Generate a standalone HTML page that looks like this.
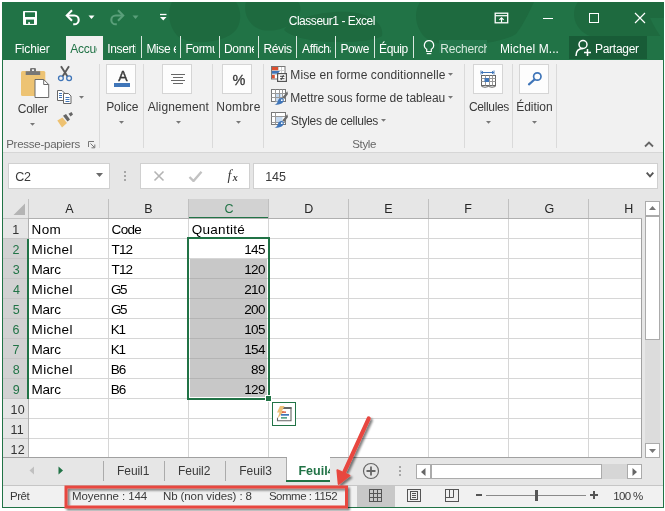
<!DOCTYPE html>
<html><head><meta charset="utf-8"><title>Classeur1 - Excel</title>
<style>
*{box-sizing:border-box;margin:0;padding:0}
html,body{width:665px;height:511px;background:#fff;overflow:hidden}
body{font-family:"Liberation Sans",sans-serif;font-size:12px;color:#444;position:relative}
.a{position:absolute}
.t{position:absolute;white-space:nowrap;line-height:1;height:1.2em;overflow:visible}
</style></head><body>
<div class="a" style="left:2px;top:2px;width:662px;height:506px;background:#e6e6e6;"></div>
<div class="a" style="left:2px;top:2px;width:662px;height:58px;background:#217346;"></div>
<svg class="a" style="left:2px;top:2px" width="662" height="58" viewBox="2 2 662 58"><g fill="#1e6a3f"><path d="M172 2C166 14 170 30 180 38C196 46 226 42 236 30C243 20 240 8 236 2z"/><path d="M246 2C243 12 248 26 262 30C280 33 296 24 300 12C301 8 300 4 298 2z"/><path d="M284 30C290 20 320 10 350 12C372 14 384 24 382 36C370 44 300 46 284 30z"/><path d="M420 2C412 14 416 34 432 42C456 48 500 44 516 34C524 24 530 10 534 2z"/><path d="M578 2C570 12 574 30 590 36L664 36L664 2z"/></g><path d="M650 18C654 26 658 34 664 40L664 18z" fill="#217346"/></svg>
<svg class="a" style="left:23px;top:11px" width="14" height="14" viewBox="0 0 14 14"><rect x="0" y="0" width="14" height="14" rx="0.800" fill="#fff"/><rect x="2" y="1.300" width="10" height="4.700" fill="#217346"/><rect x="3" y="8.600" width="8" height="4.300" fill="#217346"/><rect x="5.200" y="11.200" width="1.800" height="1.700" fill="#fff"/></svg>
<svg class="a" style="left:64px;top:9px" width="18" height="18" viewBox="0 0 18 18"><path d="M3.200 6.500H10.300A4.400 4.400 0 0 1 10.300 15.300H9.200" fill="none" stroke="#fff" stroke-width="2.100"/><path d="M8 1.300L2.800 6.500L8 11.700" fill="none" stroke="#fff" stroke-width="2.100"/></svg>
<svg class="a" style="left:88px;top:15px" width="8" height="5" viewBox="0 0 8 5"><path d="M0.500 0.500h6l-3 3.500z" fill="#fff"/></svg>
<svg class="a" style="left:108px;top:9px" width="18" height="18" viewBox="0 0 18 18"><g transform="translate(18,0) scale(-1,1)"><path d="M3.200 6.500H10.300A4.400 4.400 0 0 1 10.300 15.300H9.200" fill="none" stroke="#5a9f7a" stroke-width="2.100"/><path d="M8 1.300L2.800 6.500L8 11.700" fill="none" stroke="#5a9f7a" stroke-width="2.100"/></g></svg>
<svg class="a" style="left:132px;top:15px" width="8" height="5" viewBox="0 0 8 5"><path d="M0.500 0.500h6l-3 3.500z" fill="#5a9f7a"/></svg>
<svg class="a" style="left:159px;top:13px" width="9" height="9" viewBox="0 0 9 9"><path d="M1 1.5h6.5" stroke="#fff" stroke-width="1.3"/><path d="M1 4h6.5l-3.25 3.5z" fill="#fff"/></svg>
<svg class="a" style="left:494px;top:12px" width="15" height="12" viewBox="0 0 15 12"><rect x="1.200" y="1.200" width="12.500" height="9.600" fill="none" stroke="#fff" stroke-width="1.300"/><path d="M1.200 3.700h12.500" stroke="#fff" stroke-width="1.200"/><path d="M7.500 10.500V6 M5.400 7.900l2.100-2.100 2.100 2.100" fill="none" stroke="#fff" stroke-width="1.200"/></svg>
<div class="a" style="left:543px;top:18px;width:10px;height:1px;background:#fff;"></div>
<div class="a" style="left:589px;top:13px;width:10px;height:10px;border:1px solid #fff;"></div>
<svg class="a" style="left:634px;top:12px" width="12" height="12" viewBox="0 0 12 12"><path d="M1 1l10 10M11 1L1 11" stroke="#fff" stroke-width="1.2"/></svg>
<div class="a" style="left:66px;top:36px;width:37px;height:25px;background:#f1f1f1;"></div>
<div class="a" style="left:141px;top:36px;width:1px;height:22px;background:#d9e8df;"></div>
<div class="a" style="left:180px;top:36px;width:1px;height:22px;background:#d9e8df;"></div>
<div class="a" style="left:219px;top:36px;width:1px;height:22px;background:#d9e8df;"></div>
<div class="a" style="left:258px;top:36px;width:1px;height:22px;background:#d9e8df;"></div>
<div class="a" style="left:296px;top:36px;width:1px;height:22px;background:#d9e8df;"></div>
<div class="a" style="left:335px;top:36px;width:1px;height:22px;background:#d9e8df;"></div>
<div class="a" style="left:374px;top:36px;width:1px;height:22px;background:#d9e8df;"></div>
<div class="a" style="left:413px;top:36px;width:1px;height:22px;background:#d9e8df;"></div>
<svg class="a" style="left:422px;top:39px" width="14" height="16" viewBox="0 0 14 16"><path d="M7 1.600a4.600 4.600 0 0 1 2.300 8.600v2.300h-4.600v-2.300A4.600 4.600 0 0 1 7 1.600z" fill="none" stroke="#fff" stroke-width="1.200"/><path d="M4.700 14.600h4.600" stroke="#fff" stroke-width="1.200"/></svg>
<div class="a" style="left:439px;top:40px;width:48px;height:13px;background:#24774c;"></div>
<div class="a" style="left:569px;top:36px;width:78px;height:23px;background:#185c37;"></div>
<svg class="a" style="left:575px;top:39px" width="18" height="18" viewBox="0 0 18 18"><circle cx="8" cy="5.500" r="4" fill="none" stroke="#fff" stroke-width="1.500"/><path d="M1 17c0-5 3-7.500 7-7.500" fill="none" stroke="#fff" stroke-width="1.500"/><path d="M12.500 10v7M9 13.500h7" stroke="#fff" stroke-width="1.500"/></svg>
<div class="a" style="left:3px;top:60px;width:660px;height:92px;background:#f1f1f1;"></div>
<div class="a" style="left:3px;top:152px;width:660px;height:1px;background:#d6d6d6;"></div>
<div class="a" style="left:99px;top:64px;width:1px;height:84px;background:#dadada;"></div>
<div class="a" style="left:143px;top:64px;width:1px;height:84px;background:#dadada;"></div>
<div class="a" style="left:212px;top:64px;width:1px;height:84px;background:#dadada;"></div>
<div class="a" style="left:263px;top:64px;width:1px;height:84px;background:#dadada;"></div>
<div class="a" style="left:464px;top:64px;width:1px;height:84px;background:#dadada;"></div>
<div class="a" style="left:512px;top:64px;width:1px;height:84px;background:#dadada;"></div>
<div class="a" style="left:556px;top:64px;width:1px;height:84px;background:#dadada;"></div>
<svg class="a" style="left:20px;top:67px" width="31" height="32" viewBox="0 0 31 32"><rect x="1" y="4" width="24.300" height="25" rx="1.500" fill="#edc373"/><path d="M5.700 8V4.300h4.300V2.200a1.200 1.200 0 0 1 1.200-1.200h3.600a1.200 1.200 0 0 1 1.200 1.200v2.100h4.200V8z" fill="#777"/><rect x="12" y="2.300" width="2" height="1.700" fill="#f1f1f1"/><path d="M15 12.500h8.700l5 5v13h-13.700z" fill="#fff" stroke="#6a6a6a" stroke-width="1"/><path d="M23.700 12.500v5h5" fill="none" stroke="#6a6a6a" stroke-width="1"/></svg>
<svg class="a" style="left:30.0px;top:123.0px" width="5" height="3" viewBox="0 0 5 3"><path d="M0 0h5l-2.500 2.800z" fill="#777"/></svg>
<svg class="a" style="left:57px;top:65px" width="16" height="17" viewBox="0 0 16 17"><path d="M4 1.200L10.500 11.500M12 1.200L5.500 11.500" stroke="#5a5a5a" stroke-width="1.900" fill="none"/><circle cx="3.900" cy="13.200" r="2.400" fill="#f1f1f1" stroke="#3f75b8" stroke-width="1.300"/><circle cx="12.100" cy="13.200" r="2.400" fill="#f1f1f1" stroke="#3f75b8" stroke-width="1.300"/></svg>
<svg class="a" style="left:56px;top:89px" width="18" height="16" viewBox="0 0 18 16"><path d="M1.500 1.500h4.500l2.500 2.500v7.500h-7z" fill="#fff" stroke="#666"/><path d="M7.500 4.500h5l2.500 2.500v7.500h-7.500z" fill="#fff" stroke="#666"/><path d="M3 4.500h3M3 6.500h3M3 8.500h3M9.500 8.500h4M9.500 10.500h4M9.500 12.500h4" stroke="#3f75b8" stroke-width="1"/></svg>
<svg class="a" style="left:79.0px;top:95.5px" width="5" height="3" viewBox="0 0 5 3"><path d="M0 0h5l-2.500 2.800z" fill="#777"/></svg>
<svg class="a" style="left:57px;top:111px" width="17" height="17" viewBox="0 0 17 17"><path d="M0.300 9.500l5.200-3 4.500 5.500-5 4.500z" fill="#eec272"/><path d="M6 4.800l3-1.800 4 5.500-2.500 2z" fill="#666"/><path d="M11.500 2.800l3-1.800 1.500 2.500-2.500 2z" fill="#666"/></svg>
<svg class="a" style="left:88px;top:141px" width="8" height="8" viewBox="0 0 8 8"><path d="M0.5 6V0.5H6" fill="none" stroke="#777"/><path d="M2.5 2.5l4 4M6.8 3.5v3.3H3.5" fill="none" stroke="#777"/></svg>
<div class="a" style="left:106px;top:64px;width:30px;height:30px;background:#fdfdfd;border:1px solid #d5d5d5;"></div>
<div class="a" style="left:162px;top:64px;width:30px;height:30px;background:#fdfdfd;border:1px solid #d5d5d5;"></div>
<div class="a" style="left:222px;top:64px;width:30px;height:30px;background:#fdfdfd;border:1px solid #d5d5d5;"></div>
<div class="a" style="left:473px;top:64px;width:30px;height:30px;background:#fdfdfd;border:1px solid #d5d5d5;"></div>
<div class="a" style="left:519px;top:64px;width:30px;height:30px;background:#fdfdfd;border:1px solid #d5d5d5;"></div>
<div class="a" style="left:114px;top:83px;width:16px;height:4px;background:#3f75b8;"></div>
<svg class="a" style="left:119.0px;top:120.5px" width="5" height="3" viewBox="0 0 5 3"><path d="M0 0h5l-2.500 2.800z" fill="#777"/></svg>
<div class="a" style="left:171px;top:74px;width:14px;height:1px;background:#666;"></div>
<div class="a" style="left:173px;top:77px;width:10px;height:1px;background:#666;"></div>
<div class="a" style="left:171px;top:80px;width:14px;height:1px;background:#666;"></div>
<div class="a" style="left:173px;top:83px;width:10px;height:1px;background:#666;"></div>
<svg class="a" style="left:175.5px;top:120.5px" width="5" height="3" viewBox="0 0 5 3"><path d="M0 0h5l-2.500 2.800z" fill="#777"/></svg>
<svg class="a" style="left:236.0px;top:120.5px" width="5" height="3" viewBox="0 0 5 3"><path d="M0 0h5l-2.500 2.800z" fill="#777"/></svg>
<svg class="a" style="left:271px;top:66px" width="17" height="16" viewBox="0 0 17 16"><rect x="0.500" y="0.500" width="13.500" height="12.500" fill="#fff" stroke="#777"/><path d="M1 4.500h12.500M1 8.500h12.500M7.500 1v12M10.500 1v12" stroke="#cfcfcf" fill="none"/><rect x="1" y="1" width="6" height="3.200" fill="#dc4f2f"/><path d="M1 5h8l-2.500 2.800h-5.500z" fill="#3f75b8"/><rect x="1" y="9" width="2.800" height="3.400" fill="#dc4f2f"/><rect x="6.600" y="7.600" width="8.800" height="7.800" fill="#fff" stroke="#555" stroke-width="1.200"/><path d="M9 10.300h4.500M9 12.700h4.500M12.500 9l-2.500 5" stroke="#333" stroke-width="0.900"/></svg>
<svg class="a" style="left:448.0px;top:73.0px" width="5" height="3" viewBox="0 0 5 3"><path d="M0 0h5l-2.500 2.800z" fill="#777"/></svg>
<svg class="a" style="left:271px;top:89px" width="18" height="17" viewBox="0 0 18 17"><rect x="0.5" y="0.5" width="14" height="12" fill="#fff" stroke="#777"/><rect x="4.5" y="4.5" width="6" height="8" fill="#c5d9ef"/><path d="M0.5 4.5h14M0.5 8.5h14M4.5 0.5v12M8.5 0.5v12M11.5 0.5v12" stroke="#999" fill="none"/><path d="M16.300 2.300l-5 6.200 2 1.600 3.700-5z" fill="#6a6a6a"/><path d="M12.800 10.800c0 2.800-2.800 5.200-9.300 5.200c2-1 3-2.300 3.500-4.200c0.500-2 2.300-2.900 3.800-2.700c1.200 0.200 2 0.800 2 1.700z" fill="#3f75b8"/><circle cx="10.800" cy="11.200" r="0.900" fill="#fff"/></svg>
<svg class="a" style="left:448.0px;top:95.5px" width="5" height="3" viewBox="0 0 5 3"><path d="M0 0h5l-2.500 2.800z" fill="#777"/></svg>
<svg class="a" style="left:271px;top:112px" width="18" height="17" viewBox="0 0 18 17"><rect x="0.5" y="0.5" width="14" height="12" fill="#fff" stroke="#777"/><rect x="4.5" y="4.5" width="7" height="6" fill="#c5d9ef"/><path d="M0.5 4.5h14M0.5 10.5h14M4.5 0.5v12" stroke="#999" fill="none"/><path d="M16.300 2.300l-5 6.200 2 1.600 3.700-5z" fill="#6a6a6a"/><path d="M12.800 10.800c0 2.800-2.800 5.200-9.300 5.200c2-1 3-2.300 3.500-4.200c0.500-2 2.300-2.900 3.800-2.700c1.200 0.200 2 0.800 2 1.700z" fill="#3f75b8"/><circle cx="10.800" cy="11.200" r="0.900" fill="#fff"/></svg>
<svg class="a" style="left:381.0px;top:119.0px" width="5" height="3" viewBox="0 0 5 3"><path d="M0 0h5l-2.500 2.800z" fill="#777"/></svg>
<svg class="a" style="left:480px;top:70px" width="17" height="18" viewBox="0 0 17 18"><path d="M1 2.500h13" stroke="#3f75b8"/><path d="M1 0.500v4M14 0.500v4M3 1l-1.500 1.500 1.500 1.500M12 1l1.500 1.500-1.500 1.500" stroke="#3f75b8" fill="none" stroke-width="0.9"/><rect x="1.5" y="5.5" width="14" height="10" fill="#fff" stroke="#666"/><path d="M1.5 8.500h14M1.5 11.500h14M5.500 5.500v10M9.500 5.500v10M12.500 5.500v10" stroke="#999" fill="none"/><rect x="4.500" y="8" width="4.500" height="4" fill="#3f75b8"/><path d="M1.5 16.500q3.500 1.500 7 0q3.500 1.500 7 0" stroke="#666" fill="none"/></svg>
<svg class="a" style="left:486.0px;top:120.5px" width="5" height="3" viewBox="0 0 5 3"><path d="M0 0h5l-2.500 2.800z" fill="#777"/></svg>
<svg class="a" style="left:526px;top:70px" width="18" height="17" viewBox="0 0 18 17"><circle cx="11.300" cy="6.500" r="3.700" fill="none" stroke="#3f75b8" stroke-width="1.7"/><path d="M8.500 9.500l-5.500 4.800" stroke="#3f75b8" stroke-width="2.200" stroke-linecap="round"/></svg>
<svg class="a" style="left:532.0px;top:120.5px" width="5" height="3" viewBox="0 0 5 3"><path d="M0 0h5l-2.500 2.800z" fill="#777"/></svg>
<svg class="a" style="left:644px;top:141px" width="10" height="7" viewBox="0 0 10 7"><path d="M1 5.500l4-4 4 4" fill="none" stroke="#666" stroke-width="1.800"/></svg>
<div class="a" style="left:8px;top:163px;width:102px;height:26px;background:#fff;border:1px solid #d0d0d0;"></div>
<svg class="a" style="left:96px;top:173px" width="7" height="4" viewBox="0 0 7 4"><path d="M0 0h7l-3.500 4z" fill="#6a6a6a"/></svg>
<div class="a" style="left:124px;top:171px;width:2px;height:2px;background:#a6a6a6;"></div>
<div class="a" style="left:124px;top:175px;width:2px;height:2px;background:#a6a6a6;"></div>
<div class="a" style="left:124px;top:179px;width:2px;height:2px;background:#a6a6a6;"></div>
<div class="a" style="left:140px;top:163px;width:110px;height:26px;background:#fff;border:1px solid #d0d0d0;"></div>
<svg class="a" style="left:153px;top:170px" width="12" height="12" viewBox="0 0 12 12"><path d="M1.500 1.500l9 9M10.500 1.500l-9 9" stroke="#b4b4b4" stroke-width="1.600"/></svg>
<svg class="a" style="left:188px;top:170px" width="15" height="12" viewBox="0 0 15 12"><path d="M1.500 7l4 4L13.500 1.800" fill="none" stroke="#c2c2c2" stroke-width="2.400"/></svg>
<div class="a" style="left:253px;top:163px;width:405px;height:26px;background:#fff;border:1px solid #d0d0d0;"></div>
<svg class="a" style="left:646px;top:172px" width="8" height="6" viewBox="0 0 8 6"><path d="M0.700 0.700l3.300 3.600 3.300-3.600" fill="none" stroke="#555" stroke-width="1.900"/></svg>
<div class="a" style="left:8px;top:199px;width:634px;height:259px;background:#fff;"></div>
<div class="a" style="left:8px;top:199px;width:634px;height:19px;background:#e6e6e6;"></div>
<div class="a" style="left:8px;top:218px;width:21px;height:240px;background:#e6e6e6;"></div>
<div class="a" style="left:3px;top:239px;width:25px;height:160px;background:#d2d2d2;"></div>
<div class="a" style="left:189px;top:199px;width:79px;height:18px;background:#d2d2d2;"></div>
<div class="a" style="left:188px;top:217px;width:81px;height:2px;background:#217346;"></div>
<svg class="a" style="left:13px;top:203px" width="13" height="13" viewBox="0 0 13 13"><path d="M12 0.500v11.500H0.500z" fill="#b4b4b4"/></svg>
<div class="a" style="left:108px;top:199px;width:1px;height:19px;background:#c0c0c0;"></div>
<div class="a" style="left:188px;top:199px;width:1px;height:19px;background:#c0c0c0;"></div>
<div class="a" style="left:268px;top:199px;width:1px;height:19px;background:#c0c0c0;"></div>
<div class="a" style="left:348px;top:199px;width:1px;height:19px;background:#c0c0c0;"></div>
<div class="a" style="left:428px;top:199px;width:1px;height:19px;background:#c0c0c0;"></div>
<div class="a" style="left:508px;top:199px;width:1px;height:19px;background:#c0c0c0;"></div>
<div class="a" style="left:588px;top:199px;width:1px;height:19px;background:#c0c0c0;"></div>
<div class="a" style="left:28px;top:199px;width:1px;height:19px;background:#c0c0c0;"></div>
<div class="a" style="left:3px;top:218px;width:25px;height:1px;background:#c4c4c4;"></div>
<div class="a" style="left:28px;top:218px;width:614px;height:1px;background:#b0b0b0;"></div>
<div class="a" style="left:108px;top:219px;width:1px;height:239px;background:#d6d6d6;"></div>
<div class="a" style="left:188px;top:219px;width:1px;height:239px;background:#d6d6d6;"></div>
<div class="a" style="left:268px;top:219px;width:1px;height:239px;background:#d6d6d6;"></div>
<div class="a" style="left:348px;top:219px;width:1px;height:239px;background:#d6d6d6;"></div>
<div class="a" style="left:428px;top:219px;width:1px;height:239px;background:#d6d6d6;"></div>
<div class="a" style="left:508px;top:219px;width:1px;height:239px;background:#d6d6d6;"></div>
<div class="a" style="left:588px;top:219px;width:1px;height:239px;background:#d6d6d6;"></div>
<div class="a" style="left:28px;top:219px;width:1px;height:239px;background:#b0b0b0;"></div>
<div class="a" style="left:29px;top:238px;width:612px;height:1px;background:#d6d6d6;"></div>
<div class="a" style="left:29px;top:258px;width:612px;height:1px;background:#d6d6d6;"></div>
<div class="a" style="left:29px;top:278px;width:612px;height:1px;background:#d6d6d6;"></div>
<div class="a" style="left:29px;top:298px;width:612px;height:1px;background:#d6d6d6;"></div>
<div class="a" style="left:29px;top:318px;width:612px;height:1px;background:#d6d6d6;"></div>
<div class="a" style="left:29px;top:338px;width:612px;height:1px;background:#d6d6d6;"></div>
<div class="a" style="left:29px;top:358px;width:612px;height:1px;background:#d6d6d6;"></div>
<div class="a" style="left:29px;top:378px;width:612px;height:1px;background:#d6d6d6;"></div>
<div class="a" style="left:29px;top:398px;width:612px;height:1px;background:#d6d6d6;"></div>
<div class="a" style="left:29px;top:418px;width:612px;height:1px;background:#d6d6d6;"></div>
<div class="a" style="left:29px;top:438px;width:612px;height:1px;background:#d6d6d6;"></div>
<div class="a" style="left:3px;top:238px;width:25px;height:1px;background:#c6c6c6;"></div>
<div class="a" style="left:3px;top:258px;width:25px;height:1px;background:#c6c6c6;"></div>
<div class="a" style="left:3px;top:278px;width:25px;height:1px;background:#c6c6c6;"></div>
<div class="a" style="left:3px;top:298px;width:25px;height:1px;background:#c6c6c6;"></div>
<div class="a" style="left:3px;top:318px;width:25px;height:1px;background:#c6c6c6;"></div>
<div class="a" style="left:3px;top:338px;width:25px;height:1px;background:#c6c6c6;"></div>
<div class="a" style="left:3px;top:358px;width:25px;height:1px;background:#c6c6c6;"></div>
<div class="a" style="left:3px;top:378px;width:25px;height:1px;background:#c6c6c6;"></div>
<div class="a" style="left:3px;top:398px;width:25px;height:1px;background:#c6c6c6;"></div>
<div class="a" style="left:3px;top:418px;width:25px;height:1px;background:#c6c6c6;"></div>
<div class="a" style="left:3px;top:438px;width:25px;height:1px;background:#c6c6c6;"></div>
<div class="a" style="left:641px;top:219px;width:1px;height:239px;background:#a0a0a0;"></div>
<div class="a" style="left:27px;top:239px;width:2px;height:160px;background:#217346;"></div>
<div class="a" style="left:3px;top:457px;width:639px;height:1px;background:#a0a0a0;"></div>
<div class="a" style="left:190px;top:259px;width:77px;height:138px;background:#c8c8c8;"></div>
<div class="a" style="left:190px;top:278px;width:77px;height:1px;background:#b4b4b4;"></div>
<div class="a" style="left:190px;top:298px;width:77px;height:1px;background:#b4b4b4;"></div>
<div class="a" style="left:190px;top:318px;width:77px;height:1px;background:#b4b4b4;"></div>
<div class="a" style="left:190px;top:338px;width:77px;height:1px;background:#b4b4b4;"></div>
<div class="a" style="left:190px;top:358px;width:77px;height:1px;background:#b4b4b4;"></div>
<div class="a" style="left:190px;top:378px;width:77px;height:1px;background:#b4b4b4;"></div>
<div class="a" style="left:187px;top:237px;width:83px;height:163px;border:2px solid #217346;"></div>
<div class="a" style="left:265px;top:395px;width:7px;height:7px;background:#fff;"></div>
<div class="a" style="left:266px;top:396px;width:5px;height:5px;background:#217346;"></div>
<div class="a" style="left:272px;top:402px;width:24px;height:24px;background:#fff;border:1px solid #217346;"></div>
<svg class="a" style="left:275px;top:405px" width="18" height="18" viewBox="0 0 18 18"><path d="M8 2.800h8v13H2.500v-3" fill="none" stroke="#666" stroke-width="1.100"/><path d="M9 2h7.500v2h-9z" fill="#666"/><path d="M5 1h4.500l-2.500 5h2.500l-7 7.500 2-6h-2.500z" fill="#ecc07a"/><rect x="7" y="6.500" width="4" height="1.300" fill="#d9503a"/><rect x="6" y="9" width="8" height="1.700" fill="#3f75b8"/><rect x="6" y="12" width="6" height="1.700" fill="#5aa58a"/></svg>
<div class="a" style="left:645px;top:201px;width:15px;height:15px;background:#fff;border:1px solid #ababab;"></div>
<svg class="a" style="left:649px;top:206px" width="7" height="4" viewBox="0 0 7 4"><path d="M0 4h7l-3.500-4z" fill="#777"/></svg>
<div class="a" style="left:645px;top:216px;width:15px;height:227px;background:#dcdcdc;"></div>
<div class="a" style="left:645px;top:216px;width:15px;height:124px;background:#fff;border:1px solid #ababab;"></div>
<div class="a" style="left:645px;top:443px;width:15px;height:15px;background:#fff;border:1px solid #ababab;"></div>
<svg class="a" style="left:649px;top:449px" width="7" height="4" viewBox="0 0 7 4"><path d="M0 0h7l-3.500 4z" fill="#777"/></svg>
<svg class="a" style="left:29px;top:466px" width="6" height="9" viewBox="0 0 6 9"><path d="M5 0.500v8L0.500 4.500z" fill="#c0c0c0"/></svg>
<svg class="a" style="left:58px;top:466px" width="6" height="9" viewBox="0 0 6 9"><path d="M0.500 0.500v8l4.500-4z" fill="#217346"/></svg>
<div class="a" style="left:103px;top:461px;width:1px;height:20px;background:#ababab;"></div>
<div class="a" style="left:164px;top:461px;width:1px;height:20px;background:#ababab;"></div>
<div class="a" style="left:225px;top:461px;width:1px;height:20px;background:#ababab;"></div>
<div class="a" style="left:287px;top:457px;width:43px;height:23px;background:#fff;"></div>
<div class="a" style="left:286px;top:458px;width:1px;height:22px;background:#ababab;"></div>
<div class="a" style="left:286px;top:480px;width:44px;height:2px;background:#217346;"></div>
<div class="a" style="left:330px;top:457px;width:312px;height:1px;background:#a0a0a0;"></div>
<svg class="a" style="left:362px;top:462px" width="18" height="18" viewBox="0 0 18 18"><circle cx="9" cy="9" r="7.500" fill="none" stroke="#666" stroke-width="1.200"/><path d="M9 4.500v9M4.500 9h9" stroke="#666" stroke-width="1.800"/></svg>
<div class="a" style="left:399px;top:466px;width:2px;height:2px;background:#a6a6a6;"></div>
<div class="a" style="left:399px;top:470px;width:2px;height:2px;background:#a6a6a6;"></div>
<div class="a" style="left:399px;top:474px;width:2px;height:2px;background:#a6a6a6;"></div>
<div class="a" style="left:416px;top:464px;width:15px;height:15px;background:#fff;border:1px solid #ababab;"></div>
<svg class="a" style="left:421px;top:467.5px" width="5" height="8" viewBox="0 0 5 8"><path d="M4.500 0v8L0 4z" fill="#666"/></svg>
<div class="a" style="left:431px;top:464px;width:171px;height:15px;background:#fff;border:1px solid #ababab;"></div>
<div class="a" style="left:602px;top:464px;width:25px;height:15px;background:#d6d6d6;"></div>
<div class="a" style="left:627px;top:464px;width:15px;height:15px;background:#fff;border:1px solid #ababab;"></div>
<svg class="a" style="left:632px;top:467.5px" width="5" height="8" viewBox="0 0 5 8"><path d="M0.500 0v8L5 4z" fill="#666"/></svg>
<div class="a" style="left:3px;top:485px;width:660px;height:22px;background:#f1f1f1;"></div>
<div class="a" style="left:3px;top:485px;width:660px;height:1px;background:#c6c6c6;"></div>
<div class="a" style="left:357px;top:486px;width:38px;height:21px;background:#c8c8c8;"></div>
<svg class="a" style="left:369px;top:489px" width="14" height="13" viewBox="0 0 14 13"><rect x="0.500" y="0.500" width="12" height="12" fill="none" stroke="#555"/><path d="M0.500 4.500h12M0.500 8.500h12M4.500 0.500v12M8.500 0.500v12" stroke="#555" fill="none"/></svg>
<svg class="a" style="left:407px;top:489px" width="14" height="13" viewBox="0 0 14 13"><rect x="0.500" y="0.500" width="13" height="12" fill="none" stroke="#555"/><rect x="3.500" y="2.500" width="7" height="8" fill="none" stroke="#555"/><path d="M5 4.500h4M5 6.500h4M5 8.500h4" stroke="#555" stroke-width="1"/></svg>
<svg class="a" style="left:445px;top:489px" width="15" height="13" viewBox="0 0 15 13"><rect x="0.500" y="0.500" width="13" height="12" fill="none" stroke="#555"/><path d="M0.500 8.500h8v-8M4.500 0.500v8" stroke="#555" fill="none"/></svg>
<div class="a" style="left:476px;top:494px;width:6px;height:2px;background:#555;"></div>
<div class="a" style="left:486px;top:495px;width:100px;height:1px;background:#8a8a8a;"></div>
<div class="a" style="left:535px;top:490px;width:3px;height:11px;background:#555;"></div>
<div class="a" style="left:590px;top:494px;width:8px;height:2px;background:#555;"></div>
<div class="a" style="left:593px;top:491px;width:2px;height:8px;background:#555;"></div>
<div class="a" style="left:2px;top:507px;width:662px;height:1px;background:#217346;"></div>
<div class="a" style="left:2px;top:60px;width:1px;height:448px;background:#217346;"></div>
<div class="a" style="left:663px;top:60px;width:1px;height:448px;background:#217346;"></div>
<svg class="a" style="left:0;top:0" width="665" height="511"><defs><filter id="sh" x="-10%" y="-10%" width="130%" height="130%"><feGaussianBlur in="SourceAlpha" stdDeviation="1.300"/><feOffset dx="2" dy="2"/><feComponentTransfer><feFuncA type="linear" slope="0.500"/></feComponentTransfer><feMerge><feMergeNode/><feMergeNode in="SourceGraphic"/></feMerge></filter></defs><g filter="url(#sh)" fill="none" stroke="#e8473f" stroke-width="3"><rect x="66" y="487" width="280.500" height="20"/><path d="M368.700 418.500L344.500 471.500" stroke-width="4.200" stroke-linecap="round"/><path d="M337.300 470.200L338.600 484L349.500 475.500z" fill="#e8473f" stroke-width="1.800" stroke-linejoin="round"/></g></svg>
<div class="a" style="left:0;top:0;width:665px;height:511px;will-change:transform">
<div class="t" style="left:288.70px;top:15.00px;font-size:12px;color:#fff;letter-spacing:-0.459px;">Classeur1 - Excel</div>
<div class="t" style="left:14.70px;top:43.00px;font-size:12px;color:#fff;letter-spacing:-0.158px;">Fichier</div>
<div class="t" style="left:70.20px;top:43.00px;font-size:12px;color:#217346;letter-spacing:-0.200px;width:27.30px;overflow:hidden;padding-top:4px;margin-top:-4px;height:calc(1.2em + 4px);">Accueil</div>
<div class="t" style="left:107.20px;top:43.00px;font-size:12px;color:#fff;letter-spacing:-0.350px;width:29.30px;overflow:hidden;padding-top:4px;margin-top:-4px;height:calc(1.2em + 4px);">Insertion</div>
<div class="t" style="left:146.40px;top:43.00px;font-size:12px;color:#fff;letter-spacing:-0.350px;width:29.60px;overflow:hidden;padding-top:4px;margin-top:-4px;height:calc(1.2em + 4px);">Mise en</div>
<div class="t" style="left:185.40px;top:43.00px;font-size:12px;color:#fff;letter-spacing:-0.350px;width:29.60px;overflow:hidden;padding-top:4px;margin-top:-4px;height:calc(1.2em + 4px);">Formules</div>
<div class="t" style="left:224.00px;top:43.00px;font-size:12px;color:#fff;letter-spacing:-0.350px;width:30.00px;overflow:hidden;padding-top:4px;margin-top:-4px;height:calc(1.2em + 4px);">Données</div>
<div class="t" style="left:263.40px;top:43.00px;font-size:12px;color:#fff;letter-spacing:-0.350px;width:29.10px;overflow:hidden;padding-top:4px;margin-top:-4px;height:calc(1.2em + 4px);">Révision</div>
<div class="t" style="left:302.00px;top:43.00px;font-size:12px;color:#fff;letter-spacing:-0.350px;width:28.50px;overflow:hidden;padding-top:4px;margin-top:-4px;height:calc(1.2em + 4px);">Affichage</div>
<div class="t" style="left:340.40px;top:43.00px;font-size:12px;color:#fff;letter-spacing:-0.350px;width:28.60px;overflow:hidden;padding-top:4px;margin-top:-4px;height:calc(1.2em + 4px);">Power</div>
<div class="t" style="left:379.00px;top:43.00px;font-size:12px;color:#fff;letter-spacing:-0.350px;width:29.00px;overflow:hidden;padding-top:4px;margin-top:-4px;height:calc(1.2em + 4px);">Équipe</div>
<div class="t" style="left:440.20px;top:43.00px;font-size:12px;color:#d5e8dc;letter-spacing:-0.200px;width:46.80px;overflow:hidden;padding-top:4px;margin-top:-4px;height:calc(1.2em + 4px);">Recherche</div>
<div class="t" style="left:500.00px;top:43.00px;font-size:12px;color:#fff;letter-spacing:0.090px;">Michel M...</div>
<div class="t" style="left:595.00px;top:43.00px;font-size:12px;color:#fff;letter-spacing:-0.279px;">Partager</div>
<div class="t" style="left:17.70px;top:103.00px;font-size:12px;color:#3a3a3a;letter-spacing:-0.210px;">Coller</div>
<div class="t" style="left:6.20px;top:139.00px;font-size:11.5px;color:#666;letter-spacing:-0.254px;">Presse-papiers</div>
<div class="t" style="left:118.25px;top:69.00px;font-size:14px;color:#3a3a3a;font-family:inherit;-webkit-text-stroke:0.4px #3a3a3a;">A</div>
<div class="t" style="left:106.20px;top:101.00px;font-size:12px;color:#3a3a3a;letter-spacing:-0.110px;">Police</div>
<div class="t" style="left:147.70px;top:101.00px;font-size:12px;color:#3a3a3a;letter-spacing:0.133px;">Alignement</div>
<div class="t" style="left:232.50px;top:73.00px;font-size:14.5px;color:#3a3a3a;font-family:inherit;-webkit-text-stroke:0.3px #3a3a3a;">%</div>
<div class="t" style="left:216.20px;top:101.00px;font-size:12px;color:#3a3a3a;letter-spacing:0.290px;">Nombre</div>
<div class="t" style="left:290.30px;top:69.00px;font-size:12px;color:#3a3a3a;letter-spacing:0.087px;">Mise en forme conditionnelle</div>
<div class="t" style="left:290.30px;top:92.00px;font-size:12px;color:#3a3a3a;letter-spacing:-0.043px;">Mettre sous forme de tableau</div>
<div class="t" style="left:290.80px;top:115.00px;font-size:12px;color:#3a3a3a;letter-spacing:-0.303px;">Styles de cellules</div>
<div class="t" style="left:352.20px;top:139.00px;font-size:11.5px;color:#666;letter-spacing:-0.325px;">Style</div>
<div class="t" style="left:468.90px;top:101.00px;font-size:12px;color:#3a3a3a;letter-spacing:-0.321px;">Cellules</div>
<div class="t" style="left:516.20px;top:101.00px;font-size:12px;color:#3a3a3a;letter-spacing:-0.050px;">Édition</div>
<div class="t" style="left:15.15px;top:171.00px;font-size:12.5px;color:#3a3a3a;letter-spacing:-0.200px;">C2</div>
<div class="t" style="left:227.45px;top:169.00px;font-size:14px;color:#3a3a3a;font-family:'Liberation Serif',serif;font-style:italic;">f</div>
<div class="t" style="left:232.70px;top:173.00px;font-size:10px;color:#3a3a3a;font-family:'Liberation Serif',serif;font-style:italic;font-weight:bold;">x</div>
<div class="t" style="left:265.20px;top:171.00px;font-size:12.5px;color:#3a3a3a;letter-spacing:-0.075px;">145</div>
<div class="t" style="left:117.00px;top:465.00px;font-size:12px;color:#3a3a3a;letter-spacing:-0.060px;">Feuil1</div>
<div class="t" style="left:178.00px;top:465.00px;font-size:12px;color:#3a3a3a;letter-spacing:-0.060px;">Feuil2</div>
<div class="t" style="left:239.20px;top:465.00px;font-size:12px;color:#3a3a3a;letter-spacing:0.010px;">Feuil3</div>
<div class="t" style="left:298.45px;top:465.00px;font-size:12.5px;color:#217346;font-weight:bold;width:31.55px;overflow:hidden;padding-top:4px;margin-top:-4px;height:calc(1.2em + 4px);">Feuil4</div>
<div class="t" style="left:10.00px;top:491.00px;font-size:11.5px;color:#3a3a3a;letter-spacing:-0.500px;">Prêt</div>
<div class="t" style="left:72.00px;top:491.00px;font-size:11.5px;color:#3a3a3a;letter-spacing:-0.071px;">Moyenne&nbsp;: 144</div>
<div class="t" style="left:163.00px;top:491.00px;font-size:11.5px;color:#3a3a3a;letter-spacing:-0.103px;">Nb (non vides)&nbsp;: 8</div>
<div class="t" style="left:268.90px;top:491.00px;font-size:11.5px;color:#3a3a3a;letter-spacing:-0.473px;">Somme&nbsp;: 1152</div>
<div class="t" style="left:613.25px;top:491.00px;font-size:11.5px;color:#3a3a3a;letter-spacing:-0.650px;">100&nbsp;%</div>
</div>
<div class="t" style="left:65.20px;top:203.00px;font-size:12.5px;color:#262626;">A</div>
<div class="t" style="left:144.20px;top:203.00px;font-size:12.5px;color:#262626;">B</div>
<div class="t" style="left:224.45px;top:203.00px;font-size:12.5px;color:#217346;">C</div>
<div class="t" style="left:304.20px;top:203.00px;font-size:12.5px;color:#262626;">D</div>
<div class="t" style="left:384.20px;top:203.00px;font-size:12.5px;color:#262626;">E</div>
<div class="t" style="left:464.20px;top:203.00px;font-size:12.5px;color:#262626;">F</div>
<div class="t" style="left:544.45px;top:203.00px;font-size:12.5px;color:#262626;">G</div>
<div class="t" style="left:624.20px;top:203.00px;font-size:12.5px;color:#262626;">H</div>
<div class="t" style="left:12.20px;top:224.00px;font-size:12.5px;color:#333;">1</div>
<div class="t" style="left:12.45px;top:244.00px;font-size:12.5px;color:#217346;">2</div>
<div class="t" style="left:12.70px;top:264.00px;font-size:12.5px;color:#217346;">3</div>
<div class="t" style="left:12.95px;top:284.00px;font-size:12.5px;color:#217346;">4</div>
<div class="t" style="left:12.70px;top:304.00px;font-size:12.5px;color:#217346;">5</div>
<div class="t" style="left:12.45px;top:324.00px;font-size:12.5px;color:#217346;">6</div>
<div class="t" style="left:12.45px;top:344.00px;font-size:12.5px;color:#217346;">7</div>
<div class="t" style="left:12.70px;top:364.00px;font-size:12.5px;color:#217346;">8</div>
<div class="t" style="left:12.70px;top:384.00px;font-size:12.5px;color:#217346;">9</div>
<div class="t" style="left:10.50px;top:404.00px;font-size:12.5px;color:#333;letter-spacing:0.300px;">10</div>
<div class="t" style="left:10.50px;top:424.00px;font-size:12.5px;color:#333;letter-spacing:0.300px;">11</div>
<div class="t" style="left:10.50px;top:444.00px;font-size:12.5px;color:#333;letter-spacing:0.300px;">12</div>
<div class="t" style="left:31.50px;top:223.00px;font-size:13.5px;color:#000;letter-spacing:0.400px;">Nom</div>
<div class="t" style="left:111.55px;top:223.00px;font-size:13.5px;color:#000;letter-spacing:-0.667px;">Code</div>
<div class="t" style="left:191.65px;top:223.00px;font-size:13.5px;color:#000;letter-spacing:0.307px;">Quantité</div>
<div class="t" style="left:31.50px;top:243.00px;font-size:13.5px;color:#000;letter-spacing:0.400px;">Michel</div>
<div class="t" style="left:111.45px;top:243.00px;font-size:13.5px;color:#000;letter-spacing:-0.800px;">T12</div>
<div class="t" style="left:244.20px;top:243.00px;font-size:13.5px;color:#000;letter-spacing:-0.600px;">145</div>
<div class="t" style="left:31.50px;top:263.00px;font-size:13.5px;color:#000;letter-spacing:-0.200px;">Marc</div>
<div class="t" style="left:111.45px;top:263.00px;font-size:13.5px;color:#000;letter-spacing:-0.800px;">T12</div>
<div class="t" style="left:244.20px;top:263.00px;font-size:13.5px;color:#000;letter-spacing:-0.600px;">120</div>
<div class="t" style="left:31.50px;top:283.00px;font-size:13.5px;color:#000;letter-spacing:0.400px;">Michel</div>
<div class="t" style="left:110.95px;top:283.00px;font-size:13.5px;color:#000;letter-spacing:-1.500px;">G5</div>
<div class="t" style="left:244.20px;top:283.00px;font-size:13.5px;color:#000;letter-spacing:-0.600px;">210</div>
<div class="t" style="left:31.50px;top:303.00px;font-size:13.5px;color:#000;letter-spacing:-0.200px;">Marc</div>
<div class="t" style="left:110.95px;top:303.00px;font-size:13.5px;color:#000;letter-spacing:-1.500px;">G5</div>
<div class="t" style="left:244.20px;top:303.00px;font-size:13.5px;color:#000;letter-spacing:-0.600px;">200</div>
<div class="t" style="left:31.50px;top:323.00px;font-size:13.5px;color:#000;letter-spacing:0.400px;">Michel</div>
<div class="t" style="left:110.70px;top:323.00px;font-size:13.5px;color:#000;letter-spacing:-1.200px;">K1</div>
<div class="t" style="left:244.20px;top:323.00px;font-size:13.5px;color:#000;letter-spacing:-0.600px;">105</div>
<div class="t" style="left:31.50px;top:343.00px;font-size:13.5px;color:#000;letter-spacing:-0.200px;">Marc</div>
<div class="t" style="left:110.70px;top:343.00px;font-size:13.5px;color:#000;letter-spacing:-1.200px;">K1</div>
<div class="t" style="left:244.20px;top:343.00px;font-size:13.5px;color:#000;letter-spacing:-0.600px;">154</div>
<div class="t" style="left:31.50px;top:363.00px;font-size:13.5px;color:#000;letter-spacing:0.400px;">Michel</div>
<div class="t" style="left:110.70px;top:363.00px;font-size:13.5px;color:#000;letter-spacing:-1.000px;">B6</div>
<div class="t" style="left:251.10px;top:363.00px;font-size:13.5px;color:#000;letter-spacing:-0.600px;">89</div>
<div class="t" style="left:31.50px;top:383.00px;font-size:13.5px;color:#000;letter-spacing:-0.200px;">Marc</div>
<div class="t" style="left:110.70px;top:383.00px;font-size:13.5px;color:#000;letter-spacing:-1.000px;">B6</div>
<div class="t" style="left:244.20px;top:383.00px;font-size:13.5px;color:#000;letter-spacing:-0.600px;">129</div>
</body></html>
